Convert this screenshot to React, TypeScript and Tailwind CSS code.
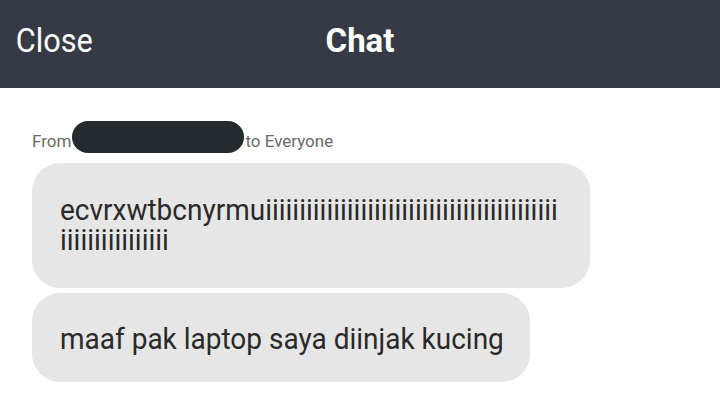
import React from "react";

export default function App() {
  const line1 = "ecvrxwtbcnyrmu" + "i".repeat(43);
  const line2 = "i".repeat(16);
  return (
    <div
      className="w-[720px] h-[416px] bg-white overflow-hidden"
      style={{ fontFamily: "Roboto, 'Noto Sans', sans-serif" }}
    >
      <div className="h-[88px] bg-[#363a45] grid grid-cols-3 items-center pb-2 text-white">
        <div className="pl-[17px] text-[33px] leading-none whitespace-nowrap origin-left scale-x-[0.93]">Close</div>
        <div className="text-center text-[33px] font-bold leading-none">Chat</div>
        <div />
      </div>
      <div className="pl-[32px] pt-[33px]">
        <div className="flex items-start h-[32px] text-[17px] leading-[32px] text-[#6a6a6a]">
          <span className="pt-[4px]">From</span>
          <span className="inline-block w-[172px] h-[32px] rounded-full bg-[#252a2e] ml-[1px]" />
          <span className="ml-[1px] pt-[4px]">to Everyone</span>
        </div>
        <div className="mt-[10px] w-[558px] rounded-[28px] bg-[#e6e6e6] px-[28px] pt-[32px] pb-[33px] text-[30px] leading-[30px] text-[#2a2a2a]">
          <div className="whitespace-nowrap origin-left scale-x-[0.933]">
            {line1}
            <br />
            {line2}
          </div>
        </div>
        <div className="mt-[5px] w-[498px] rounded-[28px] bg-[#e6e6e6] pl-[28px] pt-[31px] pb-[28px] text-[30px] leading-[30px] text-[#2a2a2a]">
          <div className="whitespace-nowrap origin-left scale-x-[0.933]">maaf pak laptop saya diinjak kucing</div>
        </div>
      </div>
    </div>
  );
}
